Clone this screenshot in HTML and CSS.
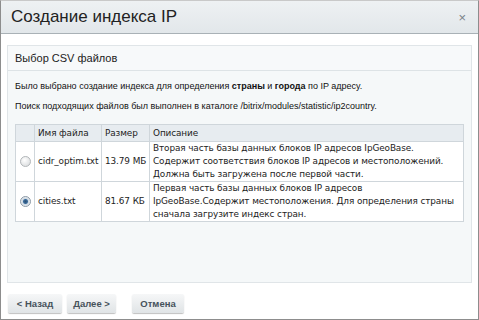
FILE: index.html
```html
<!DOCTYPE html>
<html>
<head>
<meta charset="utf-8">
<link rel="stylesheet" href="styles.css">
</head>
<body>
<div class="window">
  <div class="titlebar">
    <span class="title">Создание индекса IP</span>
    <span class="close">×</span>
  </div>
  <div class="content">
    <div class="panel">
      <div class="panel-head">Выбор CSV файлов</div>
      <div class="panel-body">
        <p class="line">Было выбрано создание индекса для определения <b>страны</b> и <b>города</b> по IP адресу.</p>
        <p class="line l2">Поиск подходящих файлов был выполнен в каталоге /bitrix/modules/statistic/ip2country.</p>
        <table class="files">
          <colgroup>
            <col class="c-radio"><col class="c-name"><col class="c-size"><col class="c-desc">
          </colgroup>
          <tr class="head">
            <th></th>
            <th>Имя файла</th>
            <th>Размер</th>
            <th>Описание</th>
          </tr>
          <tr>
            <td class="rc"><span class="radio"></span></td>
            <td>cidr_optim.txt</td>
            <td>13.79 МБ</td>
            <td>Вторая часть базы данных блоков IP адресов IpGeoBase.<br>Содержит соответствия блоков IP адресов и местоположений.<br>Должна быть загружена после первой части.</td>
          </tr>
          <tr>
            <td class="rc"><span class="radio on"></span></td>
            <td>cities.txt</td>
            <td>81.67 КБ</td>
            <td>Первая часть базы данных блоков IP адресов<br>IpGeoBase.Содержит местоположения. Для определения страны<br>сначала загрузите индекс стран.</td>
          </tr>
        </table>
      </div>
    </div>
    <div class="buttons">
      <span class="btn b-back">&lt; Назад</span>
      <span class="btn b-next">Далее &gt;</span>
      <span class="btn b-cancel">Отмена</span>
    </div>
  </div>
</div>
</body>
</html>
```
FILE: styles.css
```css
html, body { margin: 0; padding: 0; background: #fff; }
.window {
  width: 479px; height: 320px; box-sizing: border-box;
  border: 1px solid #8d8d8d; border-top-color: #c9c9c9;
  font-family: "Liberation Sans", Arial, sans-serif;
  display: flex; flex-direction: column;
  background: #fff;
}
.titlebar {
  height: 32px; flex: none;
  background: linear-gradient(#eef1f3, #e2e7ea);
  border-bottom: 1px solid #a9b1b6;
  display: flex; align-items: center; justify-content: space-between;
  padding: 0 12px 0 10px;
}
.title { font-size: 17px; color: #222; }
.close { font-size: 13px; color: #7a8288; }
.content { flex: 1; display: flex; flex-direction: column; padding: 11px 6px 0 6px; }
.panel { border: 1px solid #e0e5e8; height: 238px; box-sizing: border-box; display: flex; flex-direction: column; }
.panel-head {
  height: 25px; flex: none; box-sizing: border-box;
  background: #f7f9fa; border-bottom: 1px solid #dde3e6;
  font-size: 11px; color: #222; padding: 6px 0 0 7px;
}
.panel-body { flex: 1; background: #f5f8f9; padding: 9px 8px 0 7px; }
.line { margin: 0 0 8px 0; font-size: 9px; line-height: 12px; color: #111; }
.line.l2 { margin-bottom: 12px; }
.files {
  border-collapse: collapse; width: 449px; table-layout: fixed; background: #fff;
  font-family: "DejaVu Sans", Verdana, sans-serif; font-size: 8.9px; line-height: 13px; color: #222;
  letter-spacing: -0.1px;
}
.c-radio { width: 19px; }
.c-name { width: 67px; }
.c-size { width: 48px; }
.files th, .files td {
  border: 1px solid #cfd6db; padding: 0 1px 0 3px; text-align: left; vertical-align: middle;
  white-space: nowrap; overflow: visible;
}
.files th { background: #e7ecf0; font-weight: normal; height: 16px; }
.files td { height: 38px; }
.files td.rc { text-align: center; padding: 0; }
.radio {
  display: inline-block; width: 9px; height: 9px; border-radius: 50%;
  background: radial-gradient(circle at 40% 35%, #fff, #d3d6d8);
  border: 1px solid #b3b7ba; vertical-align: middle; box-sizing: content-box;
}
.radio.on { background: radial-gradient(circle, #2c4f73 0, #3a6a99 2px, #cfd9e3 3px, #eef1f4 5px); border-color: #8d9aa6; }
.buttons { display: flex; align-items: flex-start; height: 34px; padding: 11px 0 0 1px; box-sizing: border-box; }
.btn {
  height: 19px; box-sizing: border-box; display: inline-flex; align-items: center; justify-content: center;
  background: linear-gradient(#f6f7f8, #e0e4e6);
  border-radius: 2px; box-shadow: 0 1px 1px rgba(0,0,0,0.25);
  font-size: 9.5px; font-weight: bold; color: #46525b;
}
.b-back { width: 54px; }
.b-next { width: 49px; margin-left: 5px; }
.b-cancel { width: 52px; margin-left: 16px; }
```
